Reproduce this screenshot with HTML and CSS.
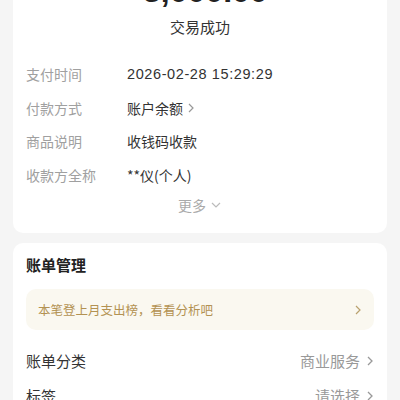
FILE: index.html
```html
<!DOCTYPE html>
<html lang="zh">
<head>
    <meta charset="UTF-8">
    <title>账单详情</title>
    <link rel="stylesheet" href="styles.css">
</head>
<body>
    <div class="page">
        <div class="card detalle">
            <p class="monto">-3,000.00</p>
            <p class="estado">交易成功</p>

            <div class="fila">
                <span class="etiqueta">支付时间</span>
                <span class="valor fecha">2026-02-28 15:29:29</span>
            </div>
            <div class="fila">
                <span class="etiqueta">付款方式</span>
                <span class="valor">账户余额
                    <svg class="flecha" width="8" height="12" viewBox="0 0 8 12"><polyline points="2,2 6,6 2,10" fill="none" stroke="#999" stroke-width="1.2"/></svg>
                </span>
            </div>
            <div class="fila">
                <span class="etiqueta">商品说明</span>
                <span class="valor">收钱码收款</span>
            </div>
            <div class="fila">
                <span class="etiqueta">收款方全称</span>
                <span class="valor">**仪(个人)</span>
            </div>

            <div class="mas">更多
                <svg width="12" height="8" viewBox="0 0 12 8"><polyline points="2,2 6,6 10,2" fill="none" stroke="#bbb" stroke-width="1.2"/></svg>
            </div>
        </div>

        <div class="card gestion">
            <h2>账单管理</h2>
            <div class="aviso">
                <span>本笔登上月支出榜，看看分析吧</span>
                <svg width="8" height="12" viewBox="0 0 8 12"><polyline points="2,2 6,6 2,10" fill="none" stroke="#b9a16e" stroke-width="1.2"/></svg>
            </div>
            <div class="opcion">
                <span>账单分类</span>
                <span class="derecha">商业服务
                    <svg width="8" height="12" viewBox="0 0 8 12"><polyline points="2,2 6,6 2,10" fill="none" stroke="#999" stroke-width="1.3"/></svg>
                </span>
            </div>
            <div class="opcion">
                <span>标签</span>
                <span class="derecha">请选择
                    <svg width="8" height="12" viewBox="0 0 8 12"><polyline points="2,2 6,6 2,10" fill="none" stroke="#999" stroke-width="1.3"/></svg>
                </span>
            </div>
        </div>
    </div>
</body>
</html>
```

FILE: styles.css
```css
body {
    margin: 0;
    background-color: #f5f5f5;
    font-family: "Noto Sans CJK SC", "Liberation Sans", sans-serif;
    color: #333;
}

p {
    margin: 0;
    padding: 0;
}

.page {
    padding: 0 13px;
    margin-top: -24px;
}

.card {
    background-color: #fff;
    border-radius: 10px;
    padding: 0 13px;
}

.detalle {
    padding-bottom: 18px;
}

.monto {
    font-family: "Liberation Sans", sans-serif;
    font-weight: bold;
    font-size: 32px;
    line-height: 30px;
    text-align: center;
    color: #222;
}

.estado {
    text-align: center;
    font-size: 15px;
    line-height: 20px;
    margin-top: 11px;
    margin-bottom: 27px;
}

.fila {
    display: flex;
    font-size: 14px;
    line-height: 20px;
    margin-bottom: 13.5px;
}

.etiqueta {
    width: 101px;
    flex-shrink: 0;
    color: #a0a0a0;
}

.valor {
    color: #333;
    display: flex;
    align-items: center;
    gap: 4px;
}

.fecha {
    font-family: "Liberation Sans", sans-serif;
    font-size: 14.5px;
    letter-spacing: 0.6px;
}

.mas {
    display: flex;
    justify-content: center;
    align-items: center;
    gap: 4px;
    font-size: 14px;
    line-height: 20px;
    color: #aaa;
    margin-top: -3px;
}

.gestion {
    margin-top: 10px;
    padding-top: 12px;
    padding-bottom: 10px;
}

h2 {
    margin: 0;
    font-size: 15px;
    line-height: 20px;
    font-weight: bold;
    color: #222;
}

.aviso {
    margin-top: 14px;
    height: 41px;
    background-color: #faf8f0;
    border-radius: 10px;
    padding: 0 12px;
    display: flex;
    align-items: center;
    justify-content: space-between;
    font-size: 12.5px;
    color: #b39252;
}

.opcion {
    display: flex;
    justify-content: space-between;
    align-items: center;
    font-size: 15px;
    line-height: 20px;
    margin-top: 21px;
}

.opcion + .opcion {
    margin-top: 15px;
}

.derecha {
    display: flex;
    align-items: center;
    gap: 6px;
    color: #999;
}
```
